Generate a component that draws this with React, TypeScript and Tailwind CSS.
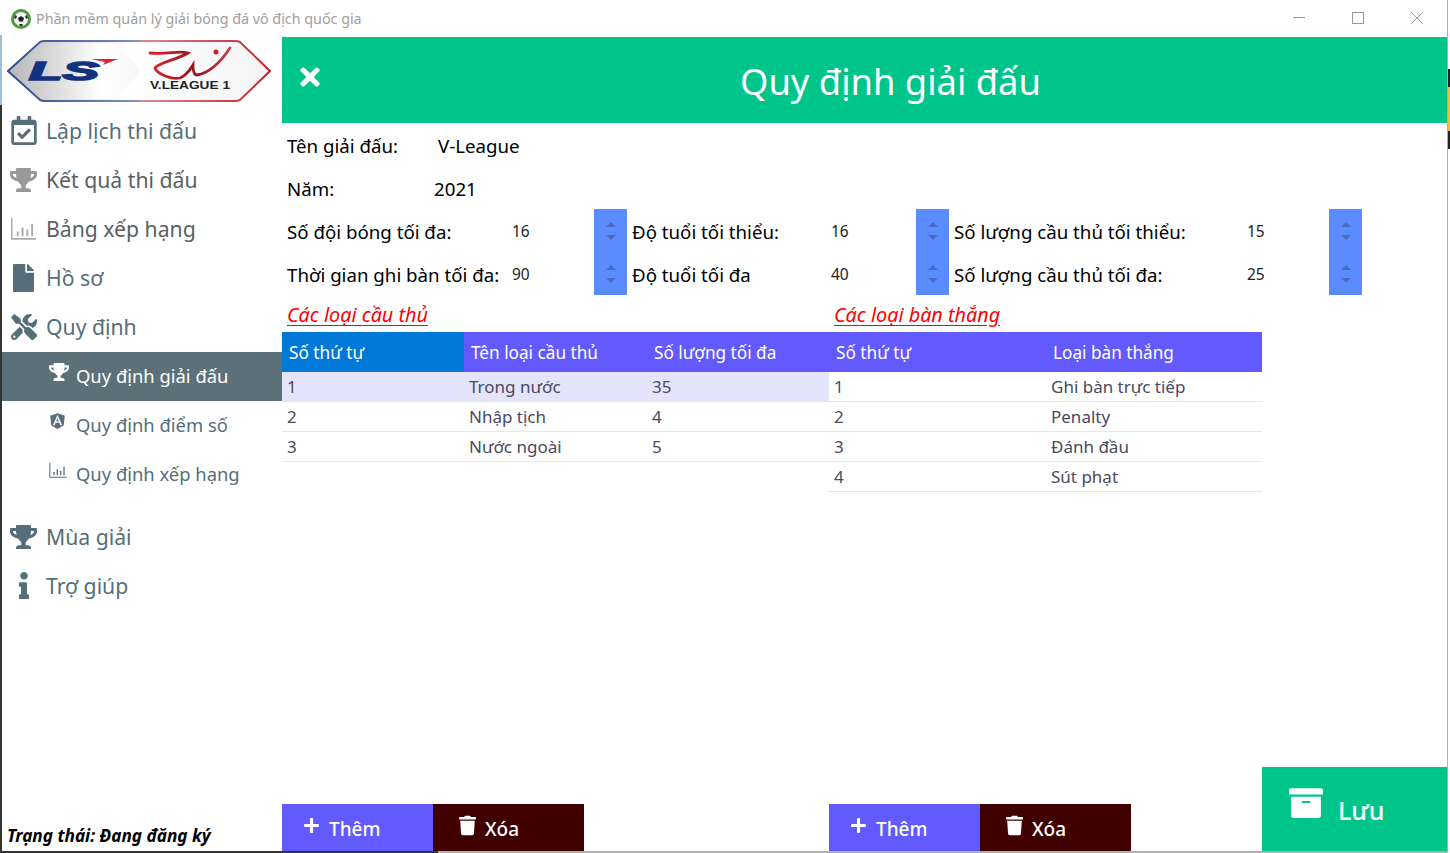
import React from "react";
import {
  FaAngular,
  FaArchive,
  FaFile,
  FaInfo,
  FaPlus,
  FaRegCalendarCheck,
  FaTimes,
  FaTools,
  FaTrash,
  FaTrophy,
} from "react-icons/fa";

const font = "font-['Noto_Sans',sans-serif]";

function StatsIcon({ className }: { className?: string }) {
  return (
    <svg viewBox="0 0 26 24" className={className} fill="currentColor">
      <path d="M0 1h1.5v21H26v1.8H0z" />
      <path d="M6 15h2v5H6zM11 11h2v9h-2zM16 13h2v7h-2zM21 7h2v13h-2z" />
    </svg>
  );
}

function BallIcon() {
  return (
    <svg viewBox="0 0 20 20" className="w-5 h-5">
      <circle cx="10" cy="10" r="10" fill="#4c9a3c" />
      <circle cx="10" cy="10" r="7" fill="#f4f4f4" />
      <path d="M10 7l3 2-1 3.400H8L7 9z" fill="#222" />
      <path d="M4 6l2 1-1 3-2-1zM16 6l-2 1 1 3 2-1zM8 15h4l-1 2H9z" fill="#333" />
    </svg>
  );
}

function Logo() {
  return (
    <svg viewBox="0 0 264 62" className="w-[264px] h-[62px]">
      <defs>
        <linearGradient id="left" x1="0" x2="1" y1="0" y2="0">
          <stop offset="0" stopColor="#b8b8ba" />
          <stop offset="0.7" stopColor="#ffffff" />
          <stop offset="1" stopColor="#f6f6f6" />
        </linearGradient>
        <linearGradient id="right" x1="0" x2="1" y1="0" y2="0">
          <stop offset="0" stopColor="#bcbcbe" />
          <stop offset="0.45" stopColor="#ffffff" />
          <stop offset="1" stopColor="#f4f4f4" />
        </linearGradient>
        <linearGradient id="edge" x1="0" x2="1" y1="0" y2="0">
          <stop offset="0" stopColor="#2c4a8c" />
          <stop offset="0.48" stopColor="#7b8fbc" />
          <stop offset="0.52" stopColor="#d58a90" />
          <stop offset="1" stopColor="#c8202c" />
        </linearGradient>
        <linearGradient id="swoosh" x1="0" x2="1" y1="0" y2="0">
          <stop offset="0" stopColor="#e0222c" />
          <stop offset="0.6" stopColor="#8e1620" />
          <stop offset="1" stopColor="#c9414a" />
        </linearGradient>
      </defs>
      <path
        d="M1 31 L33 2 Q35 1 38 1 H228 Q231 1 233 2 L263 31 L233 60 Q231 61 228 61 H38 Q35 61 33 60 Z"
        fill="url(#right)"
        stroke="url(#edge)"
        strokeWidth="2"
      />
      <path d="M4 31 L34 3 H108 L130 26 Q133 31 130 36 L108 59 H34 Z" fill="url(#left)" />
      <text
        x="22"
        y="40"
        fontFamily="Liberation Sans"
        fontStyle="italic"
        fontWeight="700"
        fontSize="25"
        fill="#12317f"
        stroke="#12317f"
        strokeWidth="1.600"
        textLength="70"
        lengthAdjust="spacingAndGlyphs"
      >
        LS
      </text>
      <path d="M84 19 L111 19 L96 25 L98 22z" fill="#e0222c" />
      <path
        d="M143 13 C160 15 172 10 181 13 C170 20 152 22 148 28 C150 34 165 40 173 38 C178 36 183 30 186 25 C186 30 187 35 190 35 C203 33 215 20 223 8"
        fill="none"
        stroke="url(#swoosh)"
        strokeWidth="2.800"
        strokeLinecap="round"
      />
      <circle cx="209" cy="12" r="2.500" fill="#c8202c" />
      <text
        x="143"
        y="49"
        fontFamily="Liberation Sans"
        fontWeight="700"
        fontSize="10"
        fill="#222"
        textLength="80"
        lengthAdjust="spacingAndGlyphs"
      >
        V.LEAGUE 1
      </text>
    </svg>
  );
}

function NavItem({
  icon,
  label,
  tone = "text-[#546e7a]",
}: {
  icon: React.ReactNode;
  label: string;
  tone?: string;
}) {
  return (
    <div className={`h-[49px] flex items-center pl-2 pb-[2px] text-[21.200px] ${tone}`}>
      <span className="w-[27px] mr-[9px] flex justify-center shrink-0">{icon}</span>
      <span className="whitespace-nowrap">{label}</span>
    </div>
  );
}

function SubItem({
  icon,
  label,
  active,
}: {
  icon: React.ReactNode;
  label: string;
  active?: boolean;
}) {
  return (
    <div
      className={`h-[49px] flex items-center pl-[47px] pb-[2px] text-[18.400px] ${
        active ? "bg-[#5b7078] text-white" : "text-[#546e7a]"
      }`}
    >
      <span className="w-[27px] flex justify-start shrink-0 -mt-2">{icon}</span>
      <span className="whitespace-nowrap">{label}</span>
    </div>
  );
}

function Spinner() {
  return (
    <div className="w-[33px] h-[43px] bg-[#5b8cff] flex flex-col items-center justify-center gap-2">
      <span className="w-0 h-0 border-x-[5px] border-x-transparent border-b-[5px] border-b-[#4a6cc0]" />
      <span className="w-0 h-0 border-x-[5px] border-x-transparent border-t-[5px] border-t-[#4a6cc0]" />
    </div>
  );
}

function NumberRow({
  label,
  value,
  labelWidth,
  fieldWidth,
}: {
  label: string;
  value: string;
  labelWidth: string;
  fieldWidth: string;
}) {
  return (
    <div className="flex h-[43px] items-center">
      <div className={`${labelWidth} pl-[5px] pt-1 text-[18.700px] text-black whitespace-nowrap`}>{label}</div>
      <div className={`${fieldWidth} text-[15.500px] text-[#222] mt-[3px]`}>{value}</div>
      <Spinner />
    </div>
  );
}

function TableBlock({
  title,
  headers,
  rows,
  widths,
  selected,
  firstHeadBlue,
}: {
  title: string;
  headers: string[];
  rows: string[][];
  widths: string[];
  selected?: number;
  firstHeadBlue?: boolean;
}) {
  return (
    <div>
      <div className="h-[37px] pl-[5px] pt-[7px] text-[19.800px] italic text-[#ff0000] underline underline-offset-[3px] leading-[26px]">
        {title}
      </div>
      <div className="flex h-10 bg-[#6259ff] text-white text-[17.200px]">
        {headers.map((h, i) => (
          <div
            key={h}
            className={`${widths[i]} pl-[7px] pt-[2px] flex items-center ${firstHeadBlue && i === 0 ? "bg-[#0078d7]" : ""}`}
          >
            {h}
          </div>
        ))}
      </div>
      {rows.map((r, idx) => (
        <div
          key={r[0]}
          className={`flex h-[30px] items-center text-[17px] text-[#4a4a5e] ${
            selected === idx ? "bg-[#e6e3fd]" : "border-b border-[#e6e6f5]"
          }`}
        >
          {r.map((c, i) => (
            <div key={i} className={`${widths[i]} pl-[5px]`}>
              {c}
            </div>
          ))}
        </div>
      ))}
    </div>
  );
}

function ActionButtons() {
  return (
    <div className="flex text-white text-[19px] font-medium">
      <div className="w-[151px] h-[47px] bg-[#6259ff] flex items-center pl-[21px] gap-[9px]">
        <FaPlus className="w-[17px] h-[17px] -mt-[5px]" />
        <span className="mt-[3px]">Thêm</span>
      </div>
      <div className="w-[151px] h-[47px] bg-[#400000] flex items-center pl-[26px] gap-[9px]">
        <FaTrash className="w-[17px] h-[21px] -mt-[5px]" />
        <span className="mt-[3px]">Xóa</span>
      </div>
    </div>
  );
}

export default function App() {
  return (
    <div className={`${font} w-[1450px] h-[853px] overflow-hidden flex bg-white`}>
      <div className="w-[2px] flex flex-col">
        <div className="h-[35px] bg-white" />
        <div className="h-[70px] bg-[#9ac0dc]" />
        <div className="flex-1 bg-[#333333]" />
      </div>

      <div className="w-[1445px] flex flex-col">
        <div className="h-[37px] flex items-center shrink-0 bg-white">
          <div className="ml-[9px] mr-[5px]">
            <BallIcon />
          </div>
          <span className="text-[14.300px] text-[#a0a0a0] whitespace-nowrap">Phần mềm quản lý giải bóng đá vô địch quốc gia</span>
          <div className="ml-auto flex items-center text-[#999] -mt-[2px]">
            <div className="w-[58px] flex justify-center">
              <span className="w-3 h-px bg-[#999]" />
            </div>
            <div className="w-[60px] flex justify-center">
              <span className="w-3 h-3 border border-[#999]" />
            </div>
            <div className="w-[59px] flex justify-center pr-[1px]">
              <svg viewBox="0 0 12 12" className="w-3 h-3" stroke="#999" strokeWidth="0.900">
                <path d="M0 0l12 12M12 0L0 12" />
              </svg>
            </div>
          </div>
        </div>

        <div className="flex flex-1 min-h-0">
          <aside className="w-[280px] shrink-0 flex flex-col">
            <div className="h-[70px] pl-[5px] pt-[3px]">
              <Logo />
            </div>
            <NavItem icon={<FaRegCalendarCheck className="w-[26px] h-[29px]" />} label="Lập lịch thi đấu" />
            <NavItem icon={<FaTrophy className="w-[27px] h-[24px] text-[#999]" />} label="Kết quả thi đấu" tone="text-[#5a5f63]" />
            <NavItem icon={<StatsIcon className="w-[25px] h-[23px] text-[#aaa]" />} label="Bảng xếp hạng" tone="text-[#5a5f63]" />
            <NavItem icon={<FaFile className="w-[21px] h-[28px]" />} label="Hồ sơ" />
            <NavItem icon={<FaTools className="w-[26px] h-[26px]" />} label="Quy định" />
            <SubItem icon={<FaTrophy className="w-5 h-[18px]" />} label="Quy định giải đấu" active />
            <SubItem icon={<FaAngular className="w-[17px] h-[18px]" />} label="Quy định điểm số" />
            <SubItem icon={<StatsIcon className="w-[18px] h-4" />} label="Quy định xếp hạng" />
            <div className="h-[14px]" />
            <NavItem icon={<FaTrophy className="w-[27px] h-[24px]" />} label="Mùa giải" />
            <NavItem icon={<FaInfo className="w-[14px] h-[27px]" />} label="Trợ giúp" />
            <div className="mt-auto pb-[2px] pl-[5px] text-[17.200px] font-bold italic text-black whitespace-nowrap">
              Trạng thái: Đang đăng ký
            </div>
          </aside>

          <main className="flex-1 min-w-0 flex flex-col">
            <header className="h-[86px] shrink-0 bg-[#00c58b] flex items-center text-white">
              <div className="w-[52px] flex justify-center pl-[3px] -mt-[7px]">
                <FaTimes className="w-[24px] h-[28px]" />
              </div>
              <h1 className="flex-1 text-center text-[36.300px] leading-none mt-[3px] font-normal">Quy định giải đấu</h1>
            </header>

            <div className="h-[43px] flex items-center pl-[5px] pt-[4px] text-[18.700px] text-black">
              <span className="w-[151px]">Tên giải đấu:</span>
              <span>V-League</span>
            </div>
            <div className="h-[43px] flex items-center pl-[5px] pt-[4px] text-[18.700px] text-black">
              <span className="w-[147px]">Năm:</span>
              <span>2021</span>
            </div>

            <div className="flex h-[86px]">
              <div>
                <NumberRow label="Số đội bóng tối đa:" value="16" labelWidth="w-[230px]" fieldWidth="w-[82px]" />
                <NumberRow label="Thời gian ghi bàn tối đa:" value="90" labelWidth="w-[230px]" fieldWidth="w-[82px]" />
              </div>
              <div>
                <NumberRow label="Độ tuổi tối thiểu:" value="16" labelWidth="w-[204px]" fieldWidth="w-[85px]" />
                <NumberRow label="Độ tuổi tối đa" value="40" labelWidth="w-[204px]" fieldWidth="w-[85px]" />
              </div>
              <div>
                <NumberRow label="Số lượng cầu thủ tối thiểu:" value="15" labelWidth="w-[298px]" fieldWidth="w-[82px]" />
                <NumberRow label="Số lượng cầu thủ tối đa:" value="25" labelWidth="w-[298px]" fieldWidth="w-[82px]" />
              </div>
            </div>

            <div className="flex">
              <div className="w-[547px]">
                <TableBlock
                  title="Các loại cầu thủ"
                  headers={["Số thứ tự", "Tên loại cầu thủ", "Số lượng tối đa"]}
                  widths={["w-[182px]", "w-[183px]", "w-[182px]"]}
                  rows={[
                    ["1", "Trong nước", "35"],
                    ["2", "Nhập tịch", "4"],
                    ["3", "Nước ngoài", "5"],
                  ]}
                  selected={0}
                  firstHeadBlue
                />
              </div>
              <div className="w-[433px]">
                <TableBlock
                  title="Các loại bàn thắng"
                  headers={["Số thứ tự", "Loại bàn thắng"]}
                  widths={["w-[217px]", "w-[216px]"]}
                  rows={[
                    ["1", "Ghi bàn trực tiếp"],
                    ["2", "Penalty"],
                    ["3", "Đánh đầu"],
                    ["4", "Sút phạt"],
                  ]}
                />
              </div>
            </div>

            <div className="mt-auto flex items-end">
              <div className="w-[547px]">
                <ActionButtons />
              </div>
              <div className="w-[433px]">
                <ActionButtons />
              </div>
              <div className="w-[185px] h-[84px] bg-[#00c58b] text-white flex items-center pl-[27px] gap-[15px]">
                <FaArchive className="w-[34px] h-[34px] -mt-[12px]" />
                <span className="text-[25px] font-medium mt-[4px]">Lưu</span>
              </div>
            </div>
          </main>
        </div>

        <div className="h-[2px] shrink-0 flex">
          <div className="w-[436px] bg-[#333333]" />
          <div className="flex-1 bg-[#b0b0b0]" />
        </div>
      </div>

      <div className="w-[3px] flex flex-col border-l border-[#b0b0b0]">
        <div className="h-[69px] bg-white" />
        <div className="h-[18px] bg-[#222]" />
        <div className="h-[44px] bg-[#f5b94a]" />
        <div className="h-[18px] bg-[#222]" />
        <div className="flex-1 bg-white" />
      </div>
    </div>
  );
}
